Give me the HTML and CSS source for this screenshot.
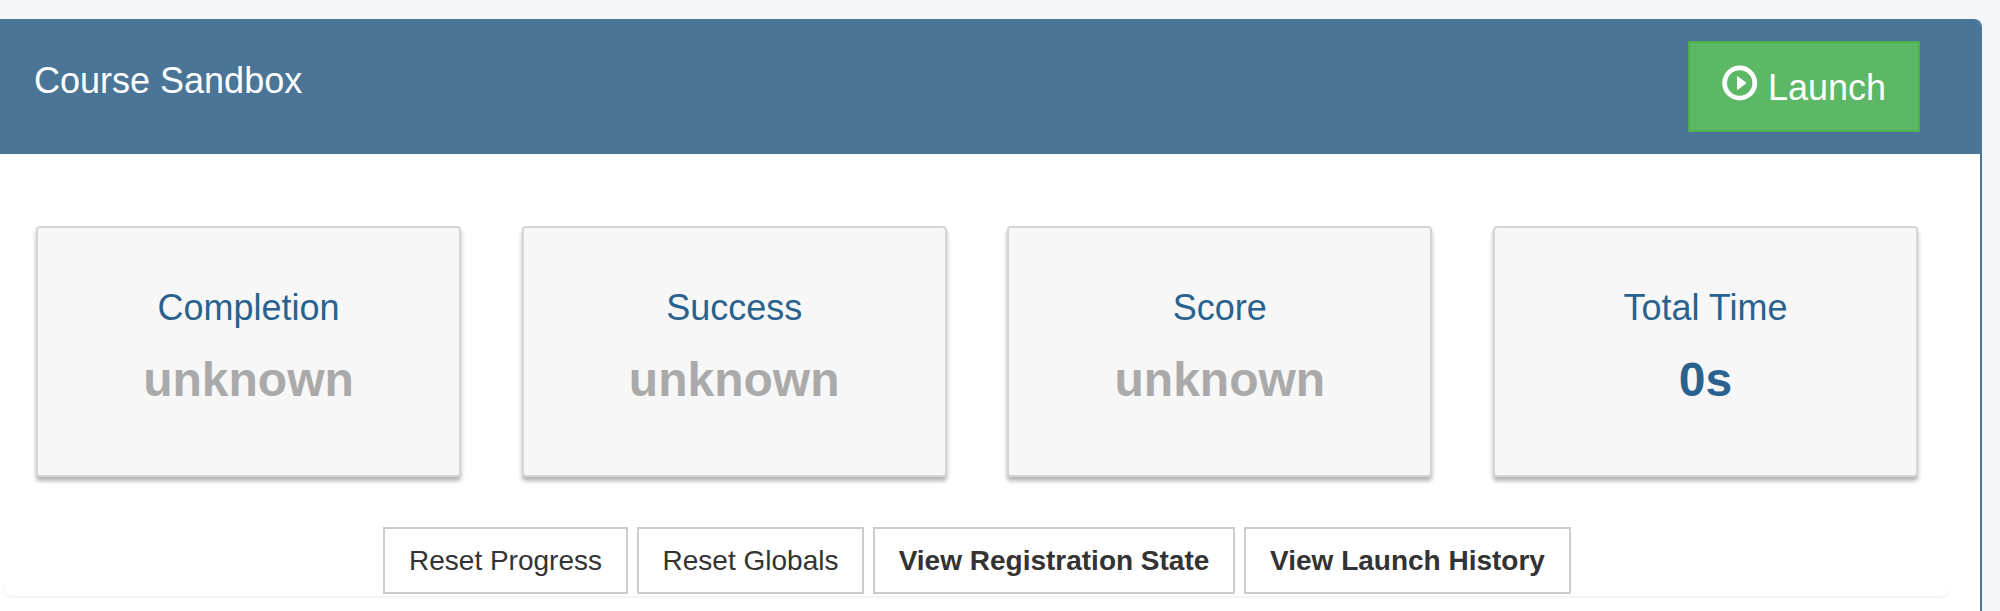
FILE: index.html
```html
<!DOCTYPE html>
<html lang="en">
<head>
<meta charset="utf-8">
<title>Course Sandbox</title>
<link rel="stylesheet" href="styles.css">
</head>
<body>
<main class="panel">
  <header class="panel-heading">
    <h1 class="panel-title">Course Sandbox</h1>
    <button class="launch" type="button">
      <svg class="launch-icon" viewBox="0 0 36 36" aria-hidden="true">
        <circle cx="17.7" cy="18" r="15.1" fill="none" stroke="currentColor" stroke-width="4.8"/>
        <path d="M15.7 11.3 L23.8 17.2 Q24.8 18 23.8 18.8 L15.7 24.7 Q15 25 15 24 V12 Q15 11 15.7 11.3Z" fill="currentColor"/>
      </svg>
      <span>Launch</span>
    </button>
  </header>
  <section class="well">
    <div class="cards">
      <div class="card"><div class="label">Completion</div><div class="value unknown">unknown</div></div>
      <div class="card"><div class="label">Success</div><div class="value unknown">unknown</div></div>
      <div class="card"><div class="label">Score</div><div class="value unknown">unknown</div></div>
      <div class="card"><div class="label">Total Time</div><div class="value">0s</div></div>
    </div>
    <div class="actions">
      <button class="btn" type="button">Reset Progress</button>
      <button class="btn" type="button">Reset Globals</button>
      <button class="btn strong" type="button">View Registration State</button>
      <button class="btn strong" type="button">View Launch History</button>
    </div>
  </section>
</main>
</body>
</html>
```
FILE: styles.css
```css
* {
  box-sizing: border-box;
}

body {
  margin: 0;
  height: 611px;
  padding: 19px 18px 0 0;
  overflow: hidden;
  background: #f5f6f8;
  font-family: "Liberation Sans", Arial, sans-serif;
}

.panel {
  height: 620px;
  background: #fff;
  border-right: 2px solid #4a7597;
  border-top-right-radius: 8px;
}

.panel-heading {
  display: flex;
  justify-content: space-between;
  align-items: flex-start;
  height: 135px;
  padding: 22px 60px 0 34px;
  background: #4a7597;
  border-top-right-radius: 6px;
}

.panel-title {
  margin: 20px 0 0;
  font-size: 36px;
  font-weight: 400;
  line-height: 40px;
  color: #fff;
}

.launch {
  display: flex;
  align-items: flex-start;
  gap: 10px;
  width: 232px;
  height: 91px;
  padding: 22px 0 0 32px;
  border: 2px solid #4cae4c;
  background: #5cb865;
  color: #fff;
  font: 36px/45px "Liberation Sans", Arial, sans-serif;
}

.launch-icon {
  width: 36px;
  height: 36px;
}

.well {
  width: 1945px;
  height: 423px;
  margin: 19px 0 0 4px;
  padding: 53px 31px 0 32px;
  border-radius: 8px;
  box-shadow: 0 2px 2px rgba(0, 0, 0, 0.05);
}

.cards {
  display: grid;
  grid-template-columns: repeat(4, 425px);
  justify-content: space-between;
}

.card {
  height: 251px;
  padding-top: 60px;
  border: 2px solid #d5d5d5;
  border-radius: 4px;
  background: #f7f7f7;
  box-shadow: 0 4px 4px rgba(0, 0, 0, 0.3);
  text-align: center;
  color: #2a628f;
}

.label {
  font-size: 36px;
  line-height: 40px;
}

.value {
  margin-top: 24px;
  font-size: 48px;
  font-weight: 700;
  line-height: 56px;
}

.unknown {
  color: #aaa;
}

.actions {
  display: grid;
  grid-template-columns: 245px 227px 362px 327px;
  gap: 9px;
  margin: 50px 0 0 347px;
}

.btn {
  height: 67px;
  padding: 0;
  border: 2px solid #ccc;
  background: #fff;
  color: #333;
  font: 28px/40px "Liberation Sans", Arial, sans-serif;
  white-space: nowrap;
}

.strong {
  font-weight: 700;
}
```
